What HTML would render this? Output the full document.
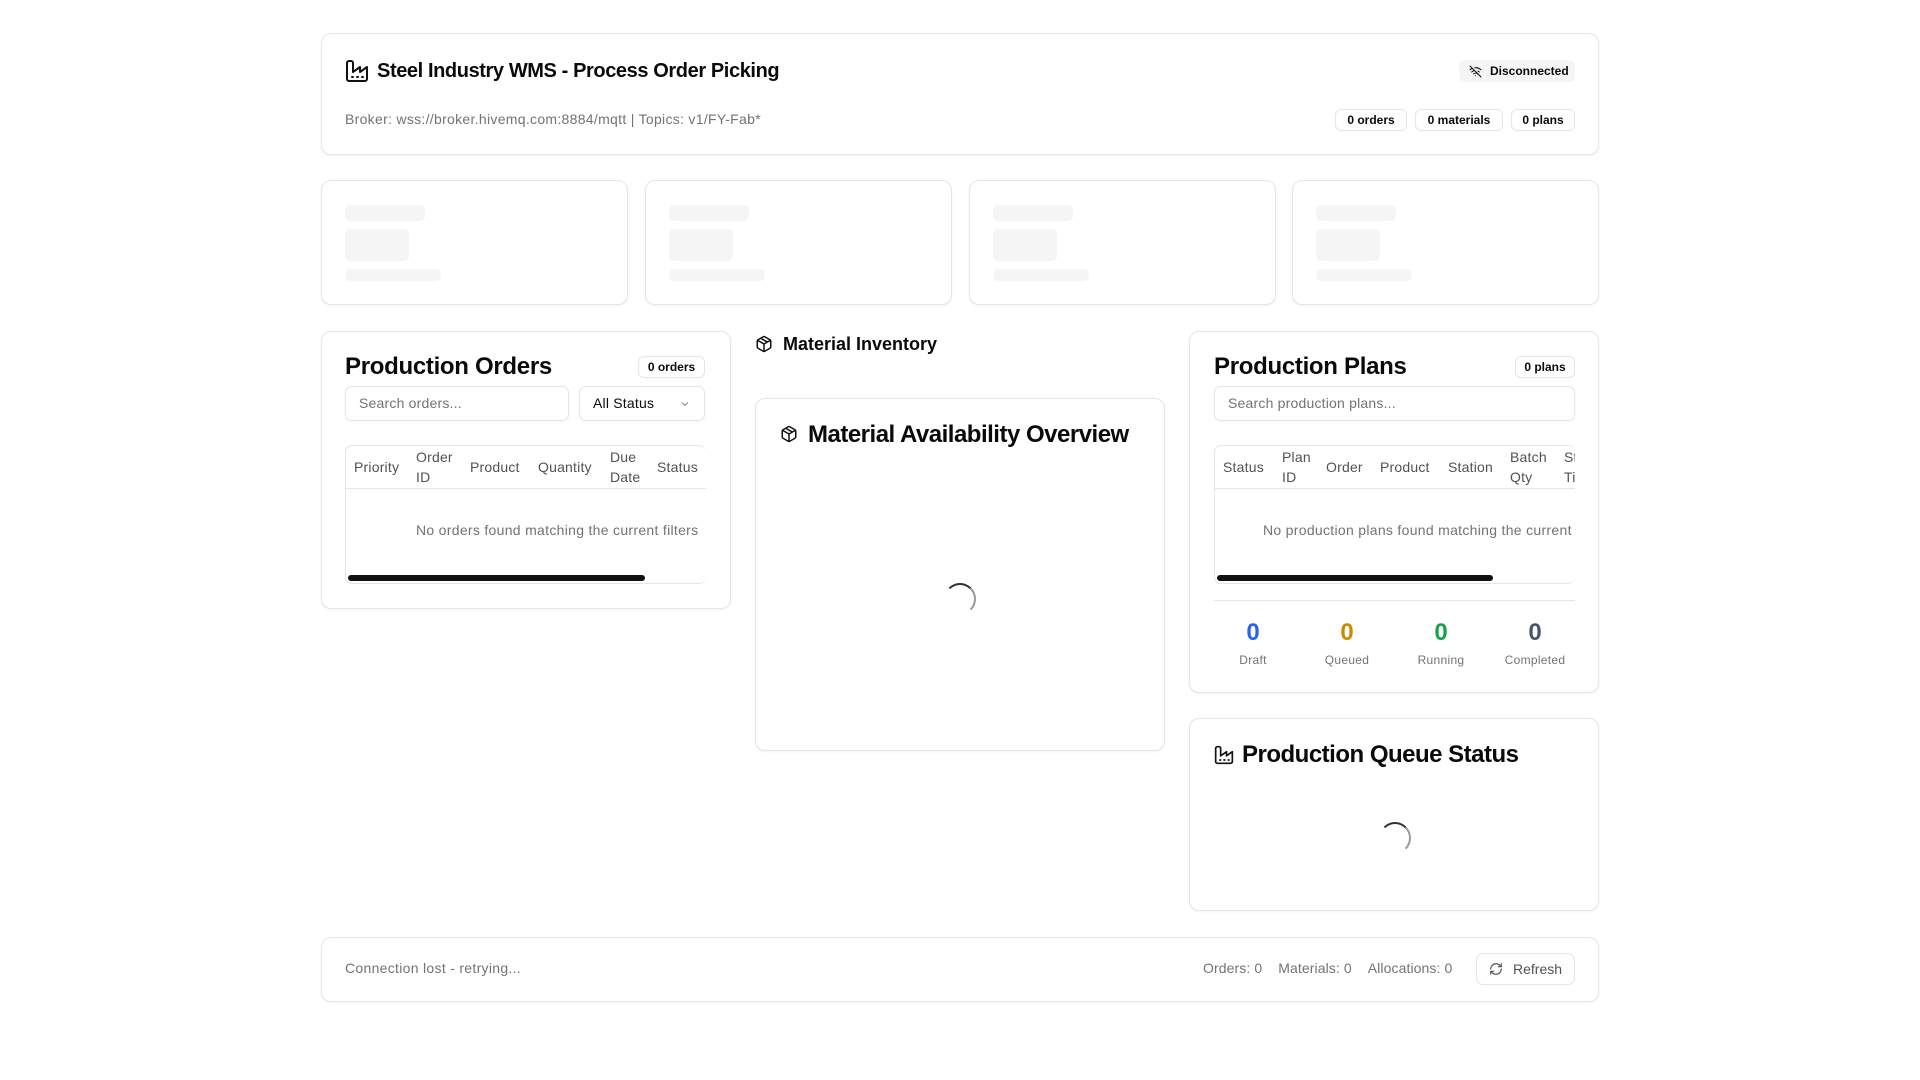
<!DOCTYPE html>
<html><head><meta charset="utf-8"><style>
*{box-sizing:border-box;margin:0;padding:0}
body{width:1920px;height:1080px;background:#fff;font-family:"Liberation Sans",sans-serif;color:#0a0a0a;position:relative;overflow:hidden}
.card{position:absolute;border:1px solid #e5e5e5;border-radius:10px;background:#fff;box-shadow:0 1px 2px rgba(0,0,0,.05)}
.abs{position:absolute}
.badge{position:absolute;border:1px solid #e5e5e5;border-radius:6px;font-size:12px;font-weight:bold;height:22px;line-height:20px;text-align:center}
.sk{position:absolute;background:#f5f5f5;border-radius:5px}
.input{position:absolute;border:1px solid #e5e5e5;border-radius:7px;height:35px;font-size:14px;color:#737373;line-height:33px;padding-left:13px;box-shadow:0 1px 2px rgba(0,0,0,.04);letter-spacing:.2px}
.th{position:absolute;font-size:14px;color:#525252;line-height:20px;letter-spacing:.2px}
.muted{color:#737373;letter-spacing:.3px}
.spin{position:absolute;width:32px;height:32px;border-radius:50%;border:2px solid transparent;border-top-color:#333;border-right-color:#999}
h2{position:absolute;font-size:24px;font-weight:bold;letter-spacing:-.3px}
</style></head><body>

<div class="card" style="left:321px;top:33px;width:1278px;height:122px"></div>
<svg class="abs" style="left:345px;top:59px" width="24" height="24" viewBox="0 0 24 24" fill="none" stroke="#111" stroke-width="2" stroke-linecap="round" stroke-linejoin="round"><path d="M2 20a2 2 0 0 0 2 2h16a2 2 0 0 0 2-2V8l-7 5V8l-7 5V4a2 2 0 0 0-2-2H4a2 2 0 0 0-2 2Z"/><path d="M17 18h1M12 18h1M7 18h1"/></svg>
<div class="abs" style="left:377px;top:60px;font-size:20px;font-weight:bold;letter-spacing:-.4px">Steel Industry WMS - Process Order Picking</div>
<div class="abs muted" style="left:345px;top:111px;font-size:14px">Broker: wss://broker.hivemq.com:8884/mqtt | Topics: v1/FY-Fab*</div>
<div class="abs" style="left:1459px;top:60px;width:116px;height:22px;background:#f5f5f5;border-radius:6px;font-size:12px;font-weight:bold;line-height:22px;padding-left:31px">Disconnected</div>
<svg class="abs" style="left:1469px;top:65px" width="13" height="13" viewBox="0 0 24 24" fill="none" stroke="#111" stroke-width="2" stroke-linecap="round"><path d="M12 20h.01M8.5 16.4a5 5 0 0 1 7 0M2 8.8a15 15 0 0 1 4.2-2.7M22 8.8a15 15 0 0 0-11.3-3.7M5 12.9a10 10 0 0 1 5.2-2.7M19 12.9a10 10 0 0 0-2.4-1.7M2 2l20 20"/></svg>
<div class="badge" style="left:1335px;top:109px;width:72px">0 orders</div>
<div class="badge" style="left:1415px;top:109px;width:88px">0 materials</div>
<div class="badge" style="left:1511px;top:109px;width:64px">0 plans</div>

<div class="card" style="left:321px;top:180px;width:307px;height:125px"></div>
<div class="card" style="left:645px;top:180px;width:307px;height:125px"></div>
<div class="card" style="left:969px;top:180px;width:307px;height:125px"></div>
<div class="card" style="left:1292px;top:180px;width:307px;height:125px"></div>
<div class="sk" style="left:345px;top:205px;width:80px;height:16px"></div><div class="sk" style="left:345px;top:229px;width:64px;height:32px"></div><div class="sk" style="left:345px;top:269px;width:96px;height:12px"></div>
<div class="sk" style="left:669px;top:205px;width:80px;height:16px"></div><div class="sk" style="left:669px;top:229px;width:64px;height:32px"></div><div class="sk" style="left:669px;top:269px;width:96px;height:12px"></div>
<div class="sk" style="left:993px;top:205px;width:80px;height:16px"></div><div class="sk" style="left:993px;top:229px;width:64px;height:32px"></div><div class="sk" style="left:993px;top:269px;width:96px;height:12px"></div>
<div class="sk" style="left:1316px;top:205px;width:80px;height:16px"></div><div class="sk" style="left:1316px;top:229px;width:64px;height:32px"></div><div class="sk" style="left:1316px;top:269px;width:96px;height:12px"></div>

<!-- orders -->
<div class="card" style="left:321px;top:331px;width:410px;height:278px"></div>
<h2 style="left:345px;top:353px">Production Orders</h2>
<div class="badge" style="left:638px;top:356px;width:67px">0 orders</div>
<div class="input" style="left:345px;top:386px;width:224px">Search orders...</div>
<div class="input" style="left:579px;top:386px;width:126px;color:#0a0a0a">All Status</div>
<svg class="abs" style="left:679px;top:398px" width="12" height="12" viewBox="0 0 24 24" fill="none" stroke="#888" stroke-width="2"><path d="m6 9 6 6 6-6"/></svg>
<div class="abs" style="left:345px;top:445px;width:361px;height:139px;border:1px solid #e5e5e5;border-radius:7px;border-right:none"></div>
<div class="abs" style="left:346px;top:488px;width:360px;height:1px;background:#e5e5e5"></div>
<div class="th" style="left:354px;top:457px">Priority</div>
<div class="th" style="left:416px;top:447px">Order<br>ID</div>
<div class="th" style="left:470px;top:457px">Product</div>
<div class="th" style="left:538px;top:457px">Quantity</div>
<div class="th" style="left:610px;top:447px">Due<br>Date</div>
<div class="th" style="left:657px;top:457px">Status</div>
<div class="abs muted" style="left:416px;top:522px;font-size:14px;white-space:nowrap;width:290px;overflow:hidden">No orders found matching the current filters</div>
<div class="abs" style="left:348px;top:575px;width:297px;height:6px;background:#111;border-radius:3px"></div>

<!-- material -->
<svg class="abs" style="left:755px;top:335px" width="18" height="18" viewBox="0 0 24 24" fill="none" stroke="#111" stroke-width="2" stroke-linejoin="round"><path d="M21 8a2 2 0 0 0-1-1.7l-7-4a2 2 0 0 0-2 0l-7 4A2 2 0 0 0 3 8v8a2 2 0 0 0 1 1.7l7 4a2 2 0 0 0 2 0l7-4a2 2 0 0 0 1-1.7Z"/><path d="m3.3 7 8.7 5 8.7-5M12 22V12M7.5 4.3l9 5.1"/></svg>
<div class="abs" style="left:783px;top:334px;font-size:18px;font-weight:bold">Material Inventory</div>
<div class="card" style="left:755px;top:398px;width:410px;height:353px"></div>
<svg class="abs" style="left:780px;top:425px" width="18" height="18" viewBox="0 0 24 24" fill="none" stroke="#111" stroke-width="2" stroke-linejoin="round"><path d="M21 8a2 2 0 0 0-1-1.7l-7-4a2 2 0 0 0-2 0l-7 4A2 2 0 0 0 3 8v8a2 2 0 0 0 1 1.7l7 4a2 2 0 0 0 2 0l7-4a2 2 0 0 0 1-1.7Z"/><path d="m3.3 7 8.7 5 8.7-5M12 22V12M7.5 4.3l9 5.1"/></svg>
<h2 style="left:808px;top:421px;letter-spacing:-.5px">Material Availability Overview</h2>
<div class="spin" style="left:944px;top:583px"></div>

<!-- plans -->
<div class="card" style="left:1189px;top:331px;width:410px;height:362px"></div>
<h2 style="left:1214px;top:353px">Production Plans</h2>
<div class="badge" style="left:1515px;top:356px;width:60px">0 plans</div>
<div class="input" style="left:1214px;top:386px;width:361px">Search production plans...</div>
<div class="abs" style="left:1214px;top:445px;width:361px;height:139px;border:1px solid #e5e5e5;border-radius:7px;border-right:none"></div>
<div class="abs" style="left:1215px;top:488px;width:360px;height:1px;background:#e5e5e5"></div>
<div class="th" style="left:1223px;top:457px">Status</div>
<div class="th" style="left:1282px;top:447px">Plan<br>ID</div>
<div class="th" style="left:1326px;top:457px">Order</div>
<div class="th" style="left:1380px;top:457px">Product</div>
<div class="th" style="left:1448px;top:457px">Station</div>
<div class="th" style="left:1510px;top:447px">Batch<br>Qty</div>
<div class="th" style="left:1564px;top:447px;width:11px;overflow:hidden">St<br>Ti</div>
<div class="abs muted" style="left:1263px;top:522px;font-size:14px;white-space:nowrap;width:312px;overflow:hidden">No production plans found matching the current filters</div>
<div class="abs" style="left:1217px;top:575px;width:276px;height:6px;background:#111;border-radius:3px"></div>
<div class="abs" style="left:1214px;top:600px;width:361px;height:1px;background:#e5e5e5"></div>
<div class="abs" style="left:1206px;top:619px;width:376px;display:flex;text-align:center">
<div style="flex:1"><div style="font-size:24px;font-weight:bold;color:#2563eb">0</div><div class="muted" style="font-size:12px;margin-top:6px">Draft</div></div>
<div style="flex:1"><div style="font-size:24px;font-weight:bold;color:#ca8a04">0</div><div class="muted" style="font-size:12px;margin-top:6px">Queued</div></div>
<div style="flex:1"><div style="font-size:24px;font-weight:bold;color:#16a34a">0</div><div class="muted" style="font-size:12px;margin-top:6px">Running</div></div>
<div style="flex:1"><div style="font-size:24px;font-weight:bold;color:#475569">0</div><div class="muted" style="font-size:12px;margin-top:6px">Completed</div></div>
</div>

<!-- queue -->
<div class="card" style="left:1189px;top:718px;width:410px;height:193px"></div>
<svg class="abs" style="left:1214px;top:745px" width="20" height="20" viewBox="0 0 24 24" fill="none" stroke="#111" stroke-width="2" stroke-linecap="round" stroke-linejoin="round"><path d="M2 20a2 2 0 0 0 2 2h16a2 2 0 0 0 2-2V8l-7 5V8l-7 5V4a2 2 0 0 0-2-2H4a2 2 0 0 0-2 2Z"/><path d="M17 18h1M12 18h1M7 18h1"/></svg>
<h2 style="left:1242px;top:741px;letter-spacing:-.5px">Production Queue Status</h2>
<div class="spin" style="left:1379px;top:822px"></div>

<!-- footer -->
<div class="card" style="left:321px;top:937px;width:1278px;height:65px"></div>
<div class="abs muted" style="left:345px;top:960px;font-size:14px">Connection lost - retrying...</div>
<div class="abs muted" style="left:1203px;top:960px;font-size:14px;letter-spacing:.1px">Orders: 0&nbsp;&nbsp;&nbsp;&nbsp;Materials: 0&nbsp;&nbsp;&nbsp;&nbsp;Allocations: 0</div>
<div class="abs" style="left:1476px;top:953px;width:99px;height:32px;border:1px solid #e5e5e5;border-radius:7px;font-size:14px;color:#525252;line-height:30px;padding-left:36px">Refresh</div>
<svg class="abs" style="left:1489px;top:962px" width="14" height="14" viewBox="0 0 24 24" fill="none" stroke="#555" stroke-width="2" stroke-linecap="round" stroke-linejoin="round"><path d="M3 12a9 9 0 0 1 9-9 9.75 9.75 0 0 1 6.74 2.74L21 8"/><path d="M21 3v5h-5"/><path d="M21 12a9 9 0 0 1-9 9 9.75 9.75 0 0 1-6.74-2.74L3 16"/><path d="M8 16H3v5"/></svg>
</body></html>
